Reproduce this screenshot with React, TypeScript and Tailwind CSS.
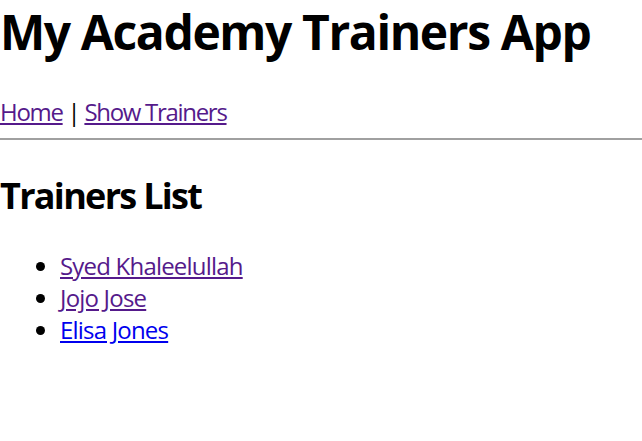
export default function App() {
  const trainers = [
    { name: "Syed Khaleelullah", visited: true },
    { name: "Jojo Jose", visited: true },
    { name: "Elisa Jones", visited: false },
  ];

  return (
    <div className="min-h-[441px] bg-white font-['Open_Sans',sans-serif] text-black">
      <h1 className="mb-[32px] text-[48px] font-bold leading-[64px] tracking-[-1.4px]">My Academy Trainers App</h1>

      <div className="text-[24px] leading-[32px] tracking-[-1.3px]">
        <a href="#" className="text-[#551a8b] underline">
          Home
        </a>{" "}
        |{" "}
        <a href="#" className="text-[#551a8b] underline">
          Show Trainers
        </a>
      </div>

      <hr className="mt-[10px] border-t-2 border-[#a0a0a0]" />

      <h2 className="mt-[32px] mb-[30px] text-[36px] font-bold leading-[48px] tracking-[-1.7px]">Trainers List</h2>

      <ul className="list-disc pl-[60px] text-[24px] leading-[32px] tracking-[-0.8px]">
        {trainers.map((t) => (
          <li key={t.name}>
            <a href="#" className={t.visited ? "text-[#551a8b] underline" : "text-[#0000ee] underline"}>
              {t.name}
            </a>
          </li>
        ))}
      </ul>
    </div>
  );
}
